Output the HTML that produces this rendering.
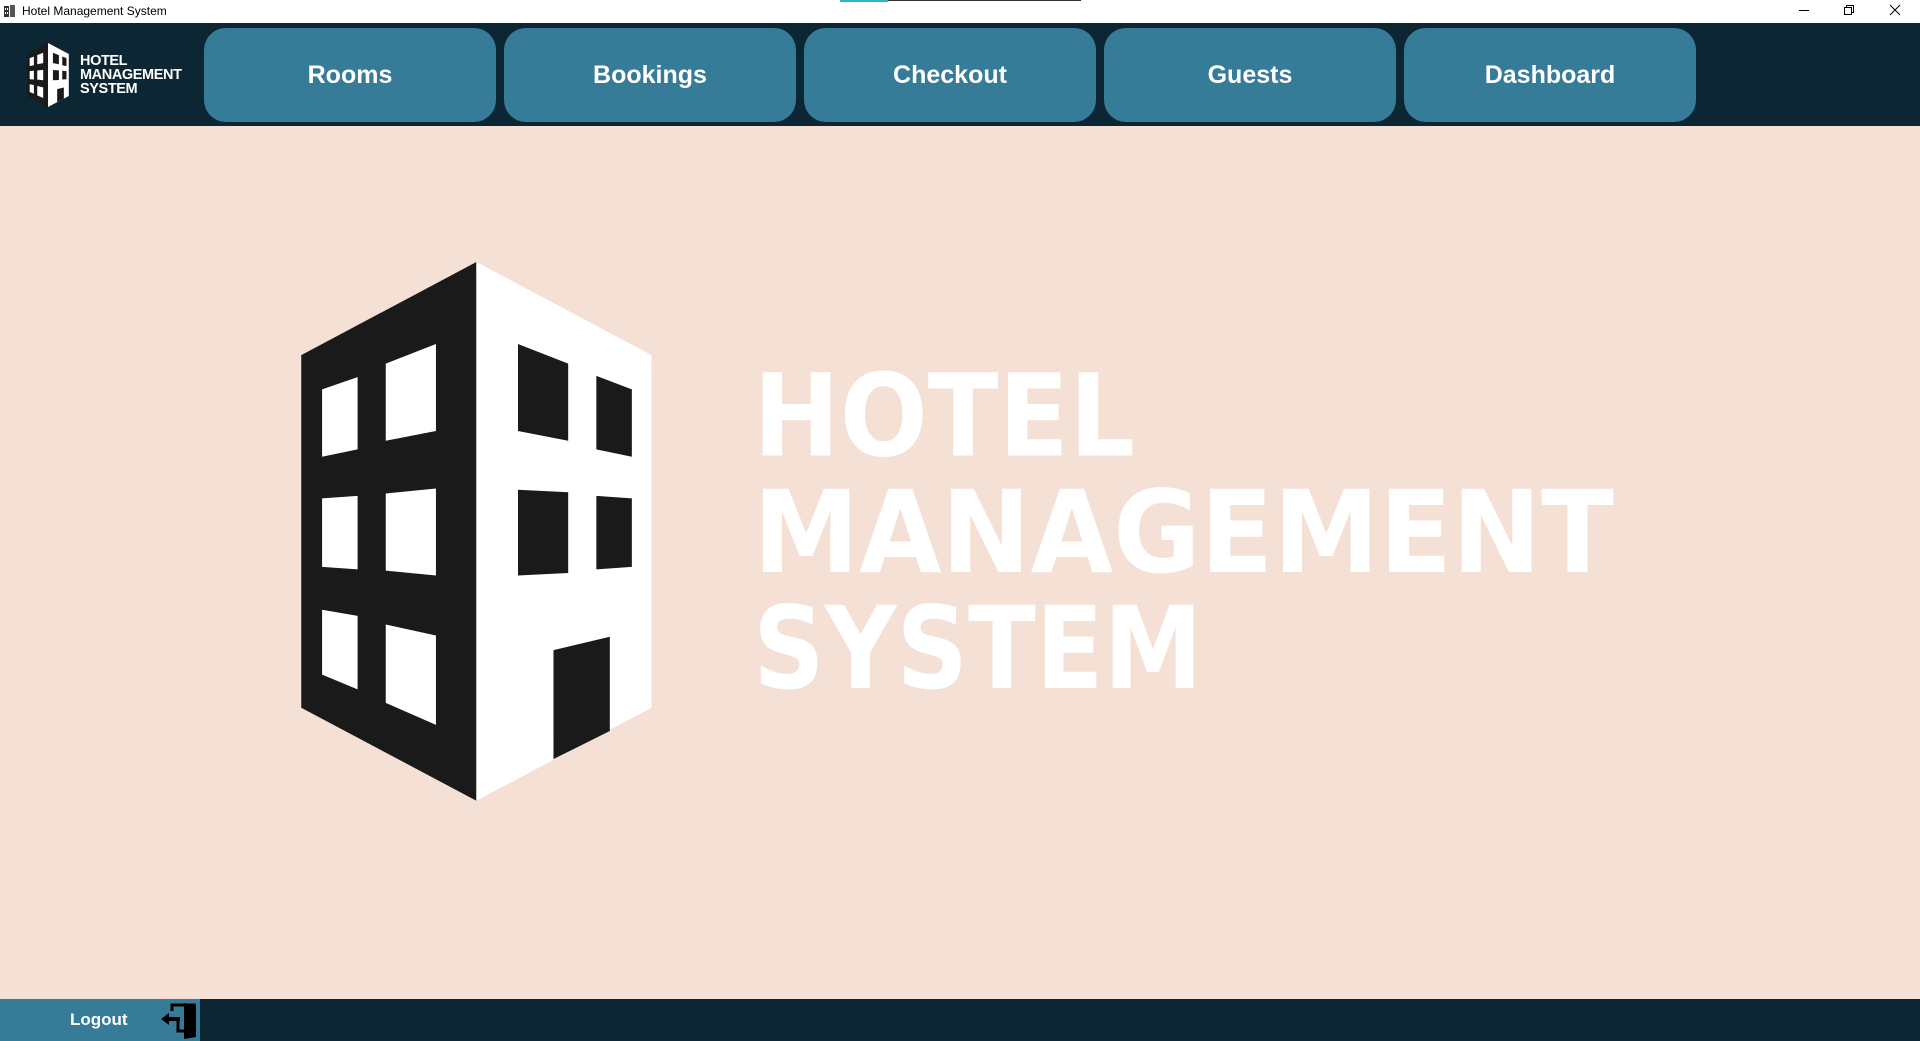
<!DOCTYPE html>
<html><head><meta charset="utf-8"><style>
*{margin:0;padding:0;box-sizing:border-box}
body{width:1920px;height:1041px;overflow:hidden;background:#f5e0d5;font-family:"Liberation Sans",sans-serif;position:relative}
.tb{position:absolute;left:0;top:0;width:1920px;height:23px;background:#fff}
.tb span{position:absolute;left:22px;top:4px;font-size:12px;color:#000}
.nav{position:absolute;left:0;top:23px;width:1920px;height:103px;background:#0c2733}
.btn{position:absolute;top:5px;width:292px;height:94px;background:#367b97;border-radius:22px;color:#fff;font-weight:bold;font-size:25px;display:flex;align-items:center;justify-content:center}
.foot{position:absolute;left:0;top:999px;width:1920px;height:42px;background:#0c2733}
.lo{position:absolute;left:0;top:0;width:200px;height:42px;background:#367b97;color:#fff;font-weight:bold;font-size:17px}
.lo span{position:absolute;left:70px;top:11px}
.ht{position:absolute;left:80px;top:31px;color:#fff;font-weight:bold;font-size:14.5px;line-height:14px;letter-spacing:-0.4px}
</style></head><body>
<div class="tb">
<svg style="position:absolute;left:3px;top:4px" width="14" height="14" viewBox="0 0 14 14"><rect x="1" y="2" width="5" height="11" fill="#333"/><rect x="7" y="1" width="5" height="12" fill="#555"/><rect x="2" y="4" width="1" height="2" fill="#fff"/><rect x="4" y="4" width="1" height="2" fill="#fff"/><rect x="2" y="8" width="1" height="2" fill="#fff"/><rect x="4" y="8" width="1" height="2" fill="#fff"/></svg>
<span>Hotel Management System</span>
<div style="position:absolute;left:840px;top:0;width:48px;height:2px;background:#2cb5c8"></div>
<div style="position:absolute;left:888px;top:0;width:193px;height:1px;background:#333"></div>
<svg style="position:absolute;left:1790px;top:0" width="130" height="23" viewBox="0 0 130 23"><line x1="9" y1="10.5" x2="19" y2="10.5" stroke="#000"/><rect x="54.5" y="7.5" width="7" height="7" fill="none" stroke="#000"/><path d="M56.5 7.5V5.5H63.5V12.5H61.5" fill="none" stroke="#000"/><path d="M100 5L110 15M110 5L100 15" stroke="#000"/></svg>
</div>
<div class="nav">
<svg style="position:absolute;left:27px;top:20px" width="42" height="64" viewBox="246 214 286 440"><use href="#bld"/></svg>
<div class="ht">HOTEL<br>MANAGEMENT<br>SYSTEM</div>
<div class="btn" style="left:204px">Rooms</div>
<div class="btn" style="left:504px">Bookings</div>
<div class="btn" style="left:804px">Checkout</div>
<div class="btn" style="left:1104px">Guests</div>
<div class="btn" style="left:1404px">Dashboard</div>
</div>
<svg style="position:absolute;left:0;top:0" width="1920" height="1041" viewBox="0 0 1568 850.2">
<defs><g id="bld">
<polygon points="246,290 389,214 389,654 246,578" fill="#1a1a1a"/>
<polygon points="389,214 532,290 532,578 389,654" fill="#fff"/>
<g fill="#fff">
<polygon points="263,318 292,308 292,367 263,373"/><polygon points="315,297 356,281 356,352 315,360"/>
<polygon points="263,407 292,405 292,465 263,463"/><polygon points="315,403 356,399 356,470 315,466"/>
<polygon points="263,498 292,503 292,563 263,551"/><polygon points="315,510 356,519 356,592 315,574"/>
</g>
<g fill="#1a1a1a">
<polygon points="423,281 464,297 464,360 423,352"/><polygon points="487,307 516,318 516,373 487,367"/>
<polygon points="423,400 464,402 464,468 423,470"/><polygon points="487,405 516,407 516,463 487,465"/>
<polygon points="452,531 498,520 498,597 452,620"/>
</g></g></defs>
<use href="#bld"/>
<g fill="#fff" font-family="'DejaVu Sans',sans-serif" font-weight="bold" font-size="93">
<text x="615" y="372" textLength="312" lengthAdjust="spacingAndGlyphs">HOTEL</text>
<text x="615" y="467" textLength="703" lengthAdjust="spacingAndGlyphs">MANAGEMENT</text>
<text x="615" y="562" textLength="367" lengthAdjust="spacingAndGlyphs">SYSTEM</text>
</g>
</svg>
<div class="foot"><div class="lo"><span>Logout</span>
<svg style="position:absolute;left:160px;top:2px" width="40" height="38" viewBox="0 0 40 38"><path d="M12 10V4H34V34H24" fill="none" stroke="#000" stroke-width="3"/><polygon points="24,2 36,4 36,36 24,38" fill="#000"/><path d="M20 18H8" stroke="#000" stroke-width="4"/><polygon points="1,18 9,12 9,24" fill="#000"/><path d="M18 18V30H24" fill="none" stroke="#000" stroke-width="3"/></svg>
</div></div>
</body></html>
